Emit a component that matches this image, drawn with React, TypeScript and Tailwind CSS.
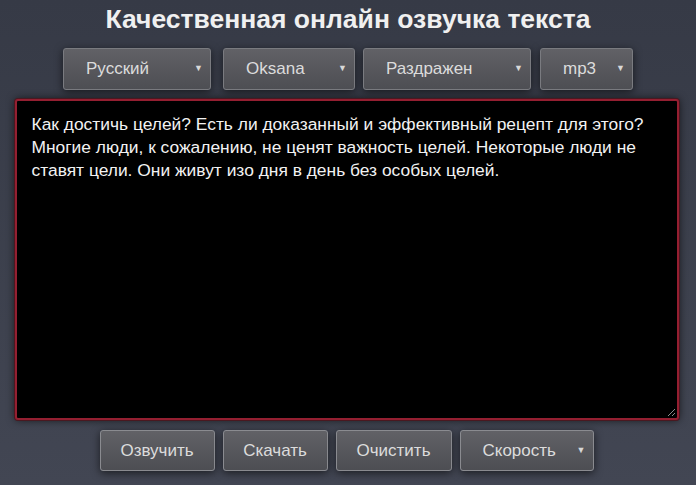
const font = { fontFamily: '"Liberation Sans", Arial, sans-serif' };

const Arrow = () => <span className="text-[9px] text-[#d8d8d8]">▼</span>;

const Select = ({ label, width }: { label: string; width: string }) => (
  <div
    className={`${width} flex h-[42px] items-center justify-between rounded-[3px] border border-[#7a7b80] bg-gradient-to-b from-[#616166] to-[#4d4e53] pl-[22px] pr-[7px] text-[17px] text-[#dcdcdc] shadow-[0_2px_8px_rgba(0,0,0,0.6)]`}
  >
    <span>{label}</span>
    <Arrow />
  </div>
);

const Button = ({ label, width }: { label: string; width: string }) => (
  <div
    className={`${width} flex h-[41px] items-center justify-center rounded-[3px] border border-[#8a8b90] bg-gradient-to-b from-[#616166] to-[#4d4e53] text-[17px] text-[#dcdcdc] shadow-[0_2px_8px_rgba(0,0,0,0.6)]`}
  >
    {label}
  </div>
);

export default function App() {
  return (
    <div
      className="flex h-[485px] w-[696px] flex-col items-center overflow-hidden bg-gradient-to-b from-[#363a46] to-[#424653]"
      style={font}
    >
      <h1 className="mt-[3px] h-[32px] text-[26.5px] font-bold leading-[32px] text-[#f0f0f0]">
        Качественная онлайн озвучка текста
      </h1>
      <div className="mt-[13px] flex">
        <Select label="Русский" width="w-[148px]" />
        <div className="w-[12px]" />
        <Select label="Oksana" width="w-[132px]" />
        <div className="w-[8px]" />
        <Select label="Раздражен" width="w-[168px]" />
        <div className="w-[9px]" />
        <Select label="mp3" width="w-[93px]" />
      </div>
      <div className="relative mt-[9px] mr-[3px] h-[321px] w-[664px] rounded-[3px] border-[2px] border-[#941f31] bg-black px-[15px] py-[12px] text-[17.4px] leading-[23px] text-[#f2f2f2] shadow-[0_0_0_1px_#4a1820,0_0_8px_rgba(0,0,0,0.7)]">
        Как достичь целей? Есть ли доказанный и эффективный рецепт для этого? Многие люди, к сожалению, не ценят важность целей. Некоторые люди не ставят цели. Они живут изо дня в день без особых целей.
        <svg className="absolute bottom-[1px] right-[1px]" width="10" height="10" viewBox="0 0 10 10">
          <path d="M9 2 L2 9 M9 6 L6 9" stroke="#8a8a8a" strokeWidth="1" />
        </svg>
      </div>
      <div className="mt-[10px] flex pr-[3px]">
        <Button label="Озвучить" width="w-[115px]" />
        <div className="w-[8px]" />
        <Button label="Скачать" width="w-[105px]" />
        <div className="w-[8px]" />
        <Button label="Очистить" width="w-[116px]" />
        <div className="w-[8px]" />
        <div className="flex h-[41px] w-[134px] items-center justify-between rounded-[3px] border border-[#8a8b90] bg-gradient-to-b from-[#616166] to-[#4d4e53] pl-[22px] pr-[7px] text-[17px] text-[#dcdcdc] shadow-[0_2px_8px_rgba(0,0,0,0.6)]">
          <span>Скорость</span>
          <Arrow />
        </div>
      </div>
    </div>
  );
}
